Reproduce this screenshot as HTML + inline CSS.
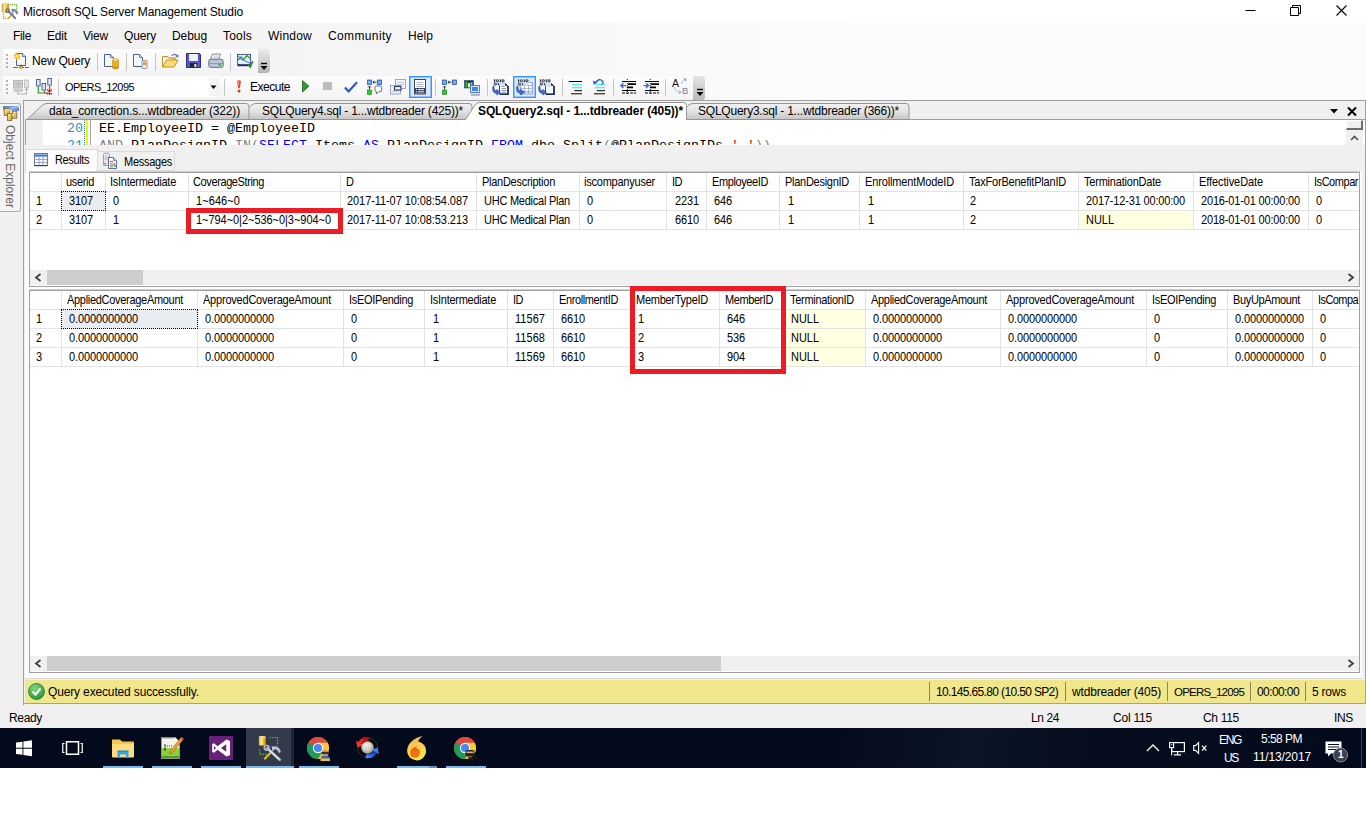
<!DOCTYPE html>
<html><head><meta charset="utf-8"><title>Microsoft SQL Server Management Studio</title><style>
html,body{margin:0;padding:0;}
body{width:1366px;height:827px;position:relative;overflow:hidden;background:#fff;font-family:"Liberation Sans",sans-serif;}
.t{position:absolute;white-space:pre;margin:0;padding:0;}
.r{position:absolute;box-sizing:border-box;margin:0;padding:0;}
svg{overflow:visible}
</style></head><body>
<div class="r" style="left:0px;top:0px;width:1366px;height:23px;background:#ffffff;"></div>
<svg class="r" style="left:0px;top:0px;" width="20" height="22" viewBox="0 0 20 22">
<defs><linearGradient id="cy" x1="0" y1="0" x2="1" y2="0"><stop offset="0" stop-color="#d9a21a"/><stop offset="0.35" stop-color="#fff0a8"/><stop offset="0.7" stop-color="#f0b81e"/><stop offset="1" stop-color="#c48a10"/></linearGradient></defs>
<g fill="#5fc02a"><rect x="10" y="4" width="1.2" height="1.2"/><rect x="12" y="4" width="1.2" height="1.2"/><rect x="14" y="4" width="1.2" height="1.2"/><rect x="16" y="4" width="1.2" height="1.2"/><rect x="16" y="6" width="1.2" height="1.2"/><rect x="16" y="8" width="1.2" height="1.2"/>
<rect x="3" y="14" width="1.2" height="1.2"/><rect x="3" y="16" width="1.2" height="1.2"/><rect x="3" y="18" width="1.2" height="1.2"/><rect x="5" y="18" width="1.2" height="1.2"/></g>
<rect x="2.2" y="3.4" width="6.6" height="9" rx="1" fill="url(#cy)" stroke="#b8902a" stroke-width="0.5"/><ellipse cx="5.5" cy="3.6" rx="3.1" ry="0.9" fill="#f4dc8a"/>
<path d="M8.2 18.4 L13 13.4" stroke="#e8a818" stroke-width="1.8" stroke-linecap="round"/><path d="M8.8 11.6 L15.2 18.2" stroke="#6c7c98" stroke-width="2" stroke-linecap="round" stroke-dasharray="1.2 0.4"/>
<circle cx="7.6" cy="10.6" r="1.7" fill="none" stroke="#5a6c8c" stroke-width="1.3"/><circle cx="7.4" cy="10.4" r="0.7" fill="#f0b020"/>
<path d="M11.2 9.4 h3.6 q2.6 0.6 3 3.8 l-1 1 q-1 -3.4 -3.4 -3.2 l-1.2 1.8" fill="#8c9ab4" stroke="#55657f" stroke-width="0.7"/>
</svg>
<div class="t" style="left:23px;top:4px;font-size:12px;line-height:16px;color:#000;letter-spacing:-0.132px;">Microsoft SQL Server Management Studio</div>
<svg class="r" style="left:1240px;top:0px;" width="120" height="23" viewBox="0 0 120 23">
<path d="M5.5 10.5 h10" stroke="#000" stroke-width="1" fill="none"/>
<path d="M50.5 7.5 h8 v8 h-8z M52.5 7.5 v-2 h8 v8 h-2" stroke="#000" stroke-width="1" fill="none"/>
<path d="M96.5 5.5 l10 10 M106.5 5.5 l-10 10" stroke="#000" stroke-width="1.1" fill="none"/>
</svg>
<div class="r" style="left:0px;top:23px;width:1366px;height:77px;background:linear-gradient(90deg,#f0f0f0 0%,#f6f6f6 30%,#fcfcfc 65%,#fcfcfc 100%);"></div>
<div class="t" style="left:13px;top:28px;font-size:12px;line-height:16px;color:#000;letter-spacing:-0.336px;">File</div>
<div class="t" style="left:47px;top:28px;font-size:12px;line-height:16px;color:#000;letter-spacing:-0.172px;">Edit</div>
<div class="t" style="left:83px;top:28px;font-size:12px;line-height:16px;color:#000;letter-spacing:-0.199px;">View</div>
<div class="t" style="left:124px;top:28px;font-size:12px;line-height:16px;color:#000;letter-spacing:-0.138px;">Query</div>
<div class="t" style="left:172px;top:28px;font-size:12px;line-height:16px;color:#000;letter-spacing:-0.075px;">Debug</div>
<div class="t" style="left:223px;top:28px;font-size:12px;line-height:16px;color:#000;letter-spacing:0.197px;">Tools</div>
<div class="t" style="left:268px;top:28px;font-size:12px;line-height:16px;color:#000;letter-spacing:0.219px;">Window</div>
<div class="t" style="left:328px;top:28px;font-size:12px;line-height:16px;color:#000;letter-spacing:0.368px;">Community</div>
<div class="t" style="left:408px;top:28px;font-size:12px;line-height:16px;color:#000;letter-spacing:0.078px;">Help</div>
<div class="r" style="left:3px;top:49px;width:256px;height:24px;background:linear-gradient(180deg,#fdfdfd,#f3f3f3);border-radius:2px 0 0 2px;"></div>
<div class="r" style="left:258px;top:49px;width:12px;height:24px;background:linear-gradient(180deg,#ececec,#b4b4b4);border-radius:0 3px 4px 0;"></div>
<div class="r" style="left:6px;top:54px;width:2px;height:2px;background:#b4b4b4;"></div>
<div class="r" style="left:6px;top:58px;width:2px;height:2px;background:#b4b4b4;"></div>
<div class="r" style="left:6px;top:62px;width:2px;height:2px;background:#b4b4b4;"></div>
<div class="r" style="left:6px;top:66px;width:2px;height:2px;background:#b4b4b4;"></div>
<div class="t" style="left:32px;top:53px;font-size:12px;line-height:16px;color:#000;letter-spacing:-0.226px;">New Query</div>
<div class="r" style="left:97px;top:53px;width:1px;height:18px;background:#c5c5c5;"></div>
<div class="r" style="left:126px;top:53px;width:1px;height:18px;background:#c5c5c5;"></div>
<div class="r" style="left:155px;top:53px;width:1px;height:18px;background:#c5c5c5;"></div>
<div class="r" style="left:230px;top:53px;width:1px;height:18px;background:#c5c5c5;"></div>
<svg class="r" style="left:260px;top:62px;" width="8" height="10" viewBox="0 0 8 10"><path d="M1 1.5h6" stroke="#000" stroke-width="1.4"/><path d="M0.5 4 h7 l-3.5 4z" fill="#000"/></svg>
<div class="r" style="left:3px;top:76px;width:691px;height:24px;background:linear-gradient(180deg,#fdfdfd,#f3f3f3);border-radius:2px 0 0 2px;"></div>
<div class="r" style="left:693px;top:76px;width:12px;height:24px;background:linear-gradient(180deg,#e6e6e6,#b9b9b9);border-radius:0 3px 3px 0;"></div>
<div class="r" style="left:6px;top:80px;width:2px;height:2px;background:#b4b4b4;"></div>
<div class="r" style="left:6px;top:84px;width:2px;height:2px;background:#b4b4b4;"></div>
<div class="r" style="left:6px;top:88px;width:2px;height:2px;background:#b4b4b4;"></div>
<div class="r" style="left:6px;top:92px;width:2px;height:2px;background:#b4b4b4;"></div>
<div class="r" style="left:58px;top:79px;width:1px;height:17px;background:#c5c5c5;"></div>
<div class="r" style="left:63px;top:77px;width:157px;height:20px;background:#ffffff;"></div>
<div class="r" style="left:209px;top:78px;width:11px;height:18px;background:#f4f4f4;"></div>
<div class="t" style="left:65px;top:79px;font-size:11.0px;line-height:16px;color:#000;letter-spacing:-0.565px;">OPERS_12095</div>
<svg class="r" style="left:210px;top:85px;" width="7" height="5" viewBox="0 0 7 5"><path d="M0.5 0.5 h6 l-3 3.5z" fill="#000"/></svg>
<div class="r" style="left:224px;top:79px;width:1px;height:17px;background:#c5c5c5;"></div>
<div class="t" style="left:250px;top:79px;font-size:12px;line-height:16px;color:#000;letter-spacing:-0.480px;">Execute</div>
<svg class="r" style="left:696px;top:88px;" width="8" height="10" viewBox="0 0 8 10"><path d="M1 1.5h6" stroke="#000" stroke-width="1.4"/><path d="M0.5 4 h7 l-3.5 4z" fill="#000"/></svg>
<div class="r" style="left:435px;top:79px;width:1px;height:17px;background:#c5c5c5;"></div>
<div class="r" style="left:487px;top:79px;width:1px;height:17px;background:#c5c5c5;"></div>
<div class="r" style="left:562px;top:79px;width:1px;height:17px;background:#c5c5c5;"></div>
<div class="r" style="left:613px;top:79px;width:1px;height:17px;background:#c5c5c5;"></div>
<div class="r" style="left:665px;top:79px;width:1px;height:17px;background:#c5c5c5;"></div>
<div class="r" style="left:0px;top:100px;width:1366px;height:628px;background:#f0f0f0;"></div>
<div class="r" style="left:23px;top:100px;width:1px;height:605px;background:#a0a0a0;"></div>
<div class="r" style="left:25px;top:119px;width:1px;height:26px;background:#a0a0a0;"></div>
<div class="r" style="left:25px;top:171px;width:1337px;height:507px;background:#fcfcfc;"></div>
<div class="r" style="left:25px;top:678px;width:1337px;height:1px;background:#d9d9d9;"></div>
<div class="r" style="left:-1px;top:103px;width:22px;height:109px;background:#f3f3f3;border:1px solid #ababab;border-left:none;border-radius:0 3px 3px 0;"></div>
<div class="t" style="left:0px;top:0px;font-size:12px;line-height:16px;color:#666;letter-spacing:0.020px;transform-origin:0 0;transform:translate(18px,125px) rotate(90deg);">Object Explorer</div>
<svg class="r" style="left:3px;top:106px;" width="17" height="15" viewBox="0 0 17 15">
<defs><linearGradient id="oeb" x1="0" y1="0" x2="1" y2="1"><stop offset="0" stop-color="#3a68d0"/><stop offset="0.55" stop-color="#9cc0f8"/><stop offset="1" stop-color="#2a58c8"/></linearGradient>
<linearGradient id="oec" x1="0" y1="0" x2="1" y2="1"><stop offset="0" stop-color="#fff0a0"/><stop offset="1" stop-color="#e0a020"/></linearGradient></defs>
<rect x="0" y="0" width="16" height="4.6" fill="url(#oeb)"/>
<rect x="1.2" y="2.4" width="5.2" height="7" fill="url(#oec)" stroke="#6a5420" stroke-width="0.7"/><rect x="6" y="3" width="1.4" height="2" fill="#f8e480"/>
<rect x="9.4" y="5.2" width="4.4" height="7" fill="url(#oec)" stroke="#6a5420" stroke-width="0.7"/><rect x="13.8" y="5.6" width="1.2" height="2" fill="#f8e480"/>
<rect x="4.4" y="7.4" width="4.4" height="7" fill="url(#oec)" stroke="#6a5420" stroke-width="0.7"/><rect x="8.8" y="8.2" width="1" height="2" fill="#f8e480"/>
</svg>
<div class="r" style="left:23px;top:100px;width:1343px;height:1px;background:#a0a0a0;"></div>
<div class="r" style="left:1365px;top:100px;width:1px;height:604px;background:#a0a0a0;"></div>
<div class="r" style="left:25px;top:119px;width:1341px;height:1px;background:#a0a0a0;"></div>
<svg class="r" style="left:25px;top:101px;" width="1341" height="19" viewBox="0 0 1341 19">
<defs><linearGradient id="tg" x1="0" y1="0" x2="0" y2="1"><stop offset="0" stop-color="#f2f2f2"/><stop offset="0.5" stop-color="#e2e2e2"/><stop offset="1" stop-color="#c4c4c4"/></linearGradient></defs>
<path d="M649 18.5 L663 4.5 Q665 2.5 668 2.5 H881 Q884 2.5 884 5.5 V18.5 Z" fill="url(#tg)" stroke="#949494" stroke-width="1"/>
<path d="M212 18.5 L226 4.5 Q228 2.5 231 2.5 H444 Q447 2.5 447 5.5 V18.5 Z" fill="url(#tg)" stroke="#949494" stroke-width="1"/>
<path d="M2 18.5 L17 4.5 Q19 2.5 22 2.5 H221 Q224 2.5 224 5.5 V18.5 Z" fill="url(#tg)" stroke="#949494" stroke-width="1"/>
<path d="M440 19.5 L450 4 Q452 1.5 455 1.5 H658.5 Q661.5 1.5 661.5 4.5 V19.5 Z" fill="#ffffff" stroke="#949494" stroke-width="1"/>
<rect x="441" y="18" width="220" height="2" fill="#ffffff"/>
<path d="M1305 8 h8 l-4 4.5z" fill="#000"/>
<path d="M1323 6.5 l8 8 M1331 6.5 l-8 8" stroke="#000" stroke-width="2"/>
</svg>
<div class="t" style="left:49px;top:103px;font-size:12px;line-height:16px;color:#000;letter-spacing:-0.174px;">data_correction.s...wtdbreader (322))</div>
<div class="t" style="left:262px;top:103px;font-size:12px;line-height:16px;color:#000;letter-spacing:-0.222px;">SQLQuery4.sql - 1...wtdbreader (425))*</div>
<div class="t" style="left:478px;top:103px;font-size:12px;line-height:16px;color:#000;font-weight:bold;letter-spacing:-0.119px;">SQLQuery2.sql - 1...tdbreader (405))*</div>
<div class="t" style="left:698px;top:103px;font-size:12px;line-height:16px;color:#000;letter-spacing:-0.222px;">SQLQuery3.sql - 1...wtdbreader (366))*</div>
<div class="r" style="left:26px;top:120px;width:1339px;height:25px;background:#ffffff;"></div>
<div class="r" style="left:26px;top:120px;width:17px;height:25px;background:#f0f0f0;"></div>
<div class="r" style="left:84px;top:120px;width:1px;height:25px;border-left:1px dotted #2b91af;"></div>
<div class="r" style="left:86px;top:120px;width:2px;height:25px;background:#ffee00;"></div>
<div class="r" style="left:90px;top:120px;width:1px;height:25px;background:#a5a5a5;"></div>
<div class="t" style="left:67px;top:120px;font-size:13.333px;line-height:17px;color:#2b91af;font-family:'Liberation Mono';">20</div>
<div class="t" style="left:99px;top:120px;font-size:13.333px;line-height:17px;color:#000;font-family:'Liberation Mono';">EE.EmployeeID = @EmployeeID</div>
<div class="r" style="left:26px;top:137px;width:1320px;height:8px;overflow:hidden">
<div class="t" style="left:41px;top:0px;font-family:'Liberation Mono';font-size:13.333px;line-height:17px;color:#2b91af">21</div>
<div class="t" style="left:73px;top:0px;font-family:'Liberation Mono';font-size:13.333px;line-height:17px;color:#808080">AND </div>
<div class="t" style="left:105px;top:0px;font-family:'Liberation Mono';font-size:13.333px;line-height:17px;color:#000">PlanDesignID </div>
<div class="t" style="left:209px;top:0px;font-family:'Liberation Mono';font-size:13.333px;line-height:17px;color:#808080">IN</div>
<div class="t" style="left:225px;top:0px;font-family:'Liberation Mono';font-size:13.333px;line-height:17px;color:#808080">(</div>
<div class="t" style="left:233px;top:0px;font-family:'Liberation Mono';font-size:13.333px;line-height:17px;color:#0000ff">SELECT </div>
<div class="t" style="left:289px;top:0px;font-family:'Liberation Mono';font-size:13.333px;line-height:17px;color:#000">Items </div>
<div class="t" style="left:337px;top:0px;font-family:'Liberation Mono';font-size:13.333px;line-height:17px;color:#0000ff">AS </div>
<div class="t" style="left:361px;top:0px;font-family:'Liberation Mono';font-size:13.333px;line-height:17px;color:#000">PlanDesignID </div>
<div class="t" style="left:465px;top:0px;font-family:'Liberation Mono';font-size:13.333px;line-height:17px;color:#0000ff">FROM </div>
<div class="t" style="left:505px;top:0px;font-family:'Liberation Mono';font-size:13.333px;line-height:17px;color:#000">dbo</div>
<div class="t" style="left:529px;top:0px;font-family:'Liberation Mono';font-size:13.333px;line-height:17px;color:#808080">.</div>
<div class="t" style="left:537px;top:0px;font-family:'Liberation Mono';font-size:13.333px;line-height:17px;color:#000">Split</div>
<div class="t" style="left:577px;top:0px;font-family:'Liberation Mono';font-size:13.333px;line-height:17px;color:#808080">(</div>
<div class="t" style="left:585px;top:0px;font-family:'Liberation Mono';font-size:13.333px;line-height:17px;color:#000">@PlanDesignIDs</div>
<div class="t" style="left:697px;top:0px;font-family:'Liberation Mono';font-size:13.333px;line-height:17px;color:#808080">,</div>
<div class="t" style="left:705px;top:0px;font-family:'Liberation Mono';font-size:13.333px;line-height:17px;color:#ff0000">&#x27;,&#x27;</div>
<div class="t" style="left:729px;top:0px;font-family:'Liberation Mono';font-size:13.333px;line-height:17px;color:#808080">))</div>
</div>
<div class="r" style="left:1346px;top:120px;width:17px;height:25px;background:#f0f0f0;"></div>
<div class="r" style="left:1346px;top:120px;width:17px;height:10px;background:#f0f0f0;border:1px solid #fff;border-right:2px solid #6d6d6d;border-bottom:2px solid #6d6d6d;"></div>
<svg class="r" style="left:1350px;top:135px;" width="9" height="6" viewBox="0 0 9 6"><path d="M1 5 L4.5 1.5 L8 5" stroke="#505050" stroke-width="1.6" fill="none"/></svg>
<div class="r" style="left:1363px;top:120px;width:2px;height:25px;background:#ffffff;"></div>
<div class="r" style="left:25px;top:149px;width:73px;height:24px;background:#fcfcfc;border:1px solid #dadada;border-bottom:none;"></div>
<div class="r" style="left:98px;top:151px;width:77px;height:20px;background:#f0f0f0;border:1px solid #dadada;border-left:none;"></div>
<div class="t" style="left:55px;top:152px;font-size:11px;line-height:16px;color:#000;letter-spacing:-0.384px;transform:scaleY(1.12);transform-origin:0 11.5px;">Results</div>
<div class="t" style="left:124px;top:154px;font-size:11px;line-height:16px;color:#000;letter-spacing:-0.268px;transform:scaleY(1.12);transform-origin:0 11.5px;">Messages</div>
<svg class="r" style="left:34px;top:153px;" width="14" height="13" viewBox="0 0 14 13"><rect x="0.5" y="0.5" width="13" height="12" fill="#f4f8ff" stroke="#6b7a99"/><rect x="1" y="1" width="12" height="2.6" fill="#4a74d8"/><rect x="1" y="1" width="12" height="1" fill="#8cb0f0"/>
<path d="M1 6.5h12M1 9.5h12M5 3.6v9M9 3.6v9" stroke="#8b98b5" stroke-width="0.8"/><path d="M0.5 12.6 h13" stroke="#3a4258" stroke-width="1.2"/></svg>
<svg class="r" style="left:103px;top:152px;" width="15" height="17" viewBox="0 0 15 17"><path d="M0.5 2.5 q0 -1.6 3 -1.6 q3 0 3 1.6 v11 h-6z" fill="#e4e6ea" stroke="#8a8f9a" stroke-width="0.8"/><path d="M1.5 5h4M1.5 7h4" stroke="#a8adb8" stroke-width="0.7"/><rect x="1.4" y="11" width="1.6" height="1.4" fill="#38b038"/>
<path d="M5.5 5.5 h5 l3 3 v8 h-8z" fill="#fdfdff" stroke="#4a5c9c" stroke-width="0.9"/><path d="M10.5 5.5 v3 h3" fill="#d0d8f0" stroke="#4a5c9c" stroke-width="0.7"/>
<path d="M7 9.5h3" stroke="#e03020" stroke-width="0.9"/><path d="M7 11.3h5" stroke="#e08020" stroke-width="0.9"/><path d="M7 13.1h5" stroke="#e03020" stroke-width="0.9"/><path d="M7 14.9h3" stroke="#30a030" stroke-width="0.9"/><rect x="11.4" y="12.4" width="1.2" height="2.8" fill="#30a030"/></svg>
<div class="r" style="left:0;top:0;width:1359px;height:827px;overflow:hidden">
<div class="r" style="left:29px;top:172px;width:1331px;height:115px;background:#ffffff;border:1px solid #a0a0a0;"></div>
<div class="r" style="left:30px;top:191px;width:1329px;height:1px;background:#e3e3e3;"></div>
<div class="r" style="left:30px;top:210px;width:1329px;height:1px;background:#e3e3e3;"></div>
<div class="r" style="left:30px;top:229px;width:1329px;height:1px;background:#e3e3e3;"></div>
<div class="r" style="left:61px;top:173px;width:1px;height:57px;background:#e3e3e3;"></div>
<div class="r" style="left:105px;top:173px;width:1px;height:57px;background:#e3e3e3;"></div>
<div class="r" style="left:188px;top:173px;width:1px;height:57px;background:#e3e3e3;"></div>
<div class="r" style="left:340px;top:173px;width:1px;height:57px;background:#e3e3e3;"></div>
<div class="r" style="left:476px;top:173px;width:1px;height:57px;background:#e3e3e3;"></div>
<div class="r" style="left:579px;top:173px;width:1px;height:57px;background:#e3e3e3;"></div>
<div class="r" style="left:666px;top:173px;width:1px;height:57px;background:#e3e3e3;"></div>
<div class="r" style="left:706px;top:173px;width:1px;height:57px;background:#e3e3e3;"></div>
<div class="r" style="left:779px;top:173px;width:1px;height:57px;background:#e3e3e3;"></div>
<div class="r" style="left:859px;top:173px;width:1px;height:57px;background:#e3e3e3;"></div>
<div class="r" style="left:963px;top:173px;width:1px;height:57px;background:#e3e3e3;"></div>
<div class="r" style="left:1078px;top:173px;width:1px;height:57px;background:#e3e3e3;"></div>
<div class="r" style="left:1193px;top:173px;width:1px;height:57px;background:#e3e3e3;"></div>
<div class="r" style="left:1308px;top:173px;width:1px;height:57px;background:#e3e3e3;"></div>
<div class="t" style="left:66px;top:175px;font-size:11px;line-height:15px;color:#000;letter-spacing:-0.328px;transform:scaleY(1.12);transform-origin:0 11px;">userid</div>
<div class="t" style="left:110px;top:175px;font-size:11px;line-height:15px;color:#000;letter-spacing:-0.265px;transform:scaleY(1.12);transform-origin:0 11px;">IsIntermediate</div>
<div class="t" style="left:193px;top:175px;font-size:11px;line-height:15px;color:#000;letter-spacing:-0.388px;transform:scaleY(1.12);transform-origin:0 11px;">CoverageString</div>
<div class="t" style="left:346px;top:175px;font-size:11px;line-height:15px;color:#000;transform:scaleY(1.12);transform-origin:0 11px;">D</div>
<div class="t" style="left:482px;top:175px;font-size:11px;line-height:15px;color:#000;letter-spacing:-0.270px;transform:scaleY(1.12);transform-origin:0 11px;">PlanDescription</div>
<div class="t" style="left:584px;top:175px;font-size:11px;line-height:15px;color:#000;letter-spacing:-0.230px;transform:scaleY(1.12);transform-origin:0 11px;">iscompanyuser</div>
<div class="t" style="left:672px;top:175px;font-size:11px;line-height:15px;color:#000;letter-spacing:-0.500px;transform:scaleY(1.12);transform-origin:0 11px;">ID</div>
<div class="t" style="left:712px;top:175px;font-size:11px;line-height:15px;color:#000;letter-spacing:-0.392px;transform:scaleY(1.12);transform-origin:0 11px;">EmployeeID</div>
<div class="t" style="left:785px;top:175px;font-size:11px;line-height:15px;color:#000;letter-spacing:-0.272px;transform:scaleY(1.12);transform-origin:0 11px;">PlanDesignID</div>
<div class="t" style="left:865px;top:175px;font-size:11px;line-height:15px;color:#000;letter-spacing:-0.131px;transform:scaleY(1.12);transform-origin:0 11px;">EnrollmentModeID</div>
<div class="t" style="left:969px;top:175px;font-size:11px;line-height:15px;color:#000;letter-spacing:-0.205px;transform:scaleY(1.12);transform-origin:0 11px;">TaxForBenefitPlanID</div>
<div class="t" style="left:1084px;top:175px;font-size:11px;line-height:15px;color:#000;letter-spacing:-0.206px;transform:scaleY(1.12);transform-origin:0 11px;">TerminationDate</div>
<div class="t" style="left:1199px;top:175px;font-size:11px;line-height:15px;color:#000;letter-spacing:-0.095px;transform:scaleY(1.12);transform-origin:0 11px;">EffectiveDate</div>
<div class="t" style="left:1314px;top:175px;font-size:11px;line-height:15px;color:#000;letter-spacing:-0.461px;transform:scaleY(1.12);transform-origin:0 11px;">IsCompar</div>
<div class="t" style="left:36px;top:194px;font-size:11px;line-height:15px;color:#000;transform:scaleY(1.12);transform-origin:0 11px;">1</div>
<div class="r" style="left:61px;top:191px;width:45px;height:20px;background:#e9edf2;border:1px dotted #000;"></div>
<div class="t" style="left:69px;top:194px;font-size:11px;line-height:15px;color:#000;letter-spacing:-0.121px;transform:scaleY(1.12);transform-origin:0 11px;">3107</div>
<div class="t" style="left:113px;top:194px;font-size:11px;line-height:15px;color:#000;transform:scaleY(1.12);transform-origin:0 11px;">0</div>
<div class="t" style="left:196px;top:194px;font-size:11px;line-height:15px;color:#000;letter-spacing:0.080px;transform:scaleY(1.12);transform-origin:0 11px;">1~646~0</div>
<div class="t" style="left:347px;top:194px;font-size:11px;line-height:15px;color:#000;letter-spacing:-0.076px;transform:scaleY(1.12);transform-origin:0 11px;">2017-11-07 10:08:54.087</div>
<div class="t" style="left:484px;top:194px;font-size:11px;line-height:15px;color:#000;letter-spacing:-0.242px;transform:scaleY(1.12);transform-origin:0 11px;">UHC Medical Plan</div>
<div class="t" style="left:587px;top:194px;font-size:11px;line-height:15px;color:#000;transform:scaleY(1.12);transform-origin:0 11px;">0</div>
<div class="t" style="left:675px;top:194px;font-size:11px;line-height:15px;color:#000;letter-spacing:-0.121px;transform:scaleY(1.12);transform-origin:0 11px;">2231</div>
<div class="t" style="left:714px;top:194px;font-size:11px;line-height:15px;color:#000;letter-spacing:-0.120px;transform:scaleY(1.12);transform-origin:0 11px;">646</div>
<div class="t" style="left:788px;top:194px;font-size:11px;line-height:15px;color:#000;transform:scaleY(1.12);transform-origin:0 11px;">1</div>
<div class="t" style="left:868px;top:194px;font-size:11px;line-height:15px;color:#000;transform:scaleY(1.12);transform-origin:0 11px;">1</div>
<div class="t" style="left:970px;top:194px;font-size:11px;line-height:15px;color:#000;transform:scaleY(1.12);transform-origin:0 11px;">2</div>
<div class="t" style="left:1086px;top:194px;font-size:11px;line-height:15px;color:#000;letter-spacing:-0.166px;transform:scaleY(1.12);transform-origin:0 11px;">2017-12-31 00:00:00</div>
<div class="t" style="left:1201px;top:194px;font-size:11px;line-height:15px;color:#000;letter-spacing:-0.166px;transform:scaleY(1.12);transform-origin:0 11px;">2016-01-01 00:00:00</div>
<div class="t" style="left:1316px;top:194px;font-size:11px;line-height:15px;color:#000;transform:scaleY(1.12);transform-origin:0 11px;">0</div>
<div class="t" style="left:36px;top:213px;font-size:11px;line-height:15px;color:#000;transform:scaleY(1.12);transform-origin:0 11px;">2</div>
<div class="t" style="left:69px;top:213px;font-size:11px;line-height:15px;color:#000;letter-spacing:-0.121px;transform:scaleY(1.12);transform-origin:0 11px;">3107</div>
<div class="t" style="left:113px;top:213px;font-size:11px;line-height:15px;color:#000;transform:scaleY(1.12);transform-origin:0 11px;">1</div>
<div class="t" style="left:196px;top:213px;font-size:11px;line-height:15px;color:#000;letter-spacing:-0.045px;transform:scaleY(1.12);transform-origin:0 11px;">1~794~0|2~536~0|3~904~0</div>
<div class="t" style="left:347px;top:213px;font-size:11px;line-height:15px;color:#000;letter-spacing:-0.076px;transform:scaleY(1.12);transform-origin:0 11px;">2017-11-07 10:08:53.213</div>
<div class="t" style="left:484px;top:213px;font-size:11px;line-height:15px;color:#000;letter-spacing:-0.242px;transform:scaleY(1.12);transform-origin:0 11px;">UHC Medical Plan</div>
<div class="t" style="left:587px;top:213px;font-size:11px;line-height:15px;color:#000;transform:scaleY(1.12);transform-origin:0 11px;">0</div>
<div class="t" style="left:675px;top:213px;font-size:11px;line-height:15px;color:#000;letter-spacing:-0.121px;transform:scaleY(1.12);transform-origin:0 11px;">6610</div>
<div class="t" style="left:714px;top:213px;font-size:11px;line-height:15px;color:#000;letter-spacing:-0.120px;transform:scaleY(1.12);transform-origin:0 11px;">646</div>
<div class="t" style="left:788px;top:213px;font-size:11px;line-height:15px;color:#000;transform:scaleY(1.12);transform-origin:0 11px;">1</div>
<div class="t" style="left:868px;top:213px;font-size:11px;line-height:15px;color:#000;transform:scaleY(1.12);transform-origin:0 11px;">1</div>
<div class="t" style="left:970px;top:213px;font-size:11px;line-height:15px;color:#000;transform:scaleY(1.12);transform-origin:0 11px;">2</div>
<div class="r" style="left:1079px;top:211px;width:114px;height:18px;background:#ffffe1;"></div>
<div class="t" style="left:1086px;top:213px;font-size:11px;line-height:15px;color:#000;letter-spacing:-0.031px;transform:scaleY(1.12);transform-origin:0 11px;">NULL</div>
<div class="t" style="left:1201px;top:213px;font-size:11px;line-height:15px;color:#000;letter-spacing:-0.166px;transform:scaleY(1.12);transform-origin:0 11px;">2018-01-01 00:00:00</div>
<div class="t" style="left:1316px;top:213px;font-size:11px;line-height:15px;color:#000;transform:scaleY(1.12);transform-origin:0 11px;">0</div>
</div>
<div class="r" style="left:1359px;top:172px;width:1px;height:115px;background:#a0a0a0;"></div>
<div class="r" style="left:29px;top:171px;width:1331px;height:1px;background:#d0d0d0;"></div>
<div class="r" style="left:30px;top:270px;width:1329px;height:15px;background:#f0f0f0;"></div>
<div class="r" style="left:47px;top:270px;width:96px;height:15px;background:#cdcdcd;"></div>
<svg class="r" style="left:34px;top:273px;" width="8" height="9" viewBox="0 0 8 9"><path d="M6.5 1 L2 4.5 L6.5 8" stroke="#404040" stroke-width="1.8" fill="none"/></svg>
<svg class="r" style="left:1347px;top:273px;" width="8" height="9" viewBox="0 0 8 9"><path d="M1.5 1 L6 4.5 L1.5 8" stroke="#404040" stroke-width="1.8" fill="none"/></svg>
<div class="r" style="left:29px;top:286px;width:1331px;height:1px;background:#a0a0a0;"></div>
<div class="r" style="left:0;top:0;width:1359px;height:827px;overflow:hidden">
<div class="r" style="left:29px;top:290px;width:1331px;height:383px;background:#ffffff;border:1px solid #a0a0a0;"></div>
<div class="r" style="left:30px;top:309px;width:1329px;height:1px;background:#e3e3e3;"></div>
<div class="r" style="left:30px;top:328px;width:1329px;height:1px;background:#e3e3e3;"></div>
<div class="r" style="left:30px;top:347px;width:1329px;height:1px;background:#e3e3e3;"></div>
<div class="r" style="left:30px;top:366px;width:1329px;height:1px;background:#e3e3e3;"></div>
<div class="r" style="left:61px;top:291px;width:1px;height:76px;background:#e3e3e3;"></div>
<div class="r" style="left:197px;top:291px;width:1px;height:76px;background:#e3e3e3;"></div>
<div class="r" style="left:343px;top:291px;width:1px;height:76px;background:#e3e3e3;"></div>
<div class="r" style="left:424px;top:291px;width:1px;height:76px;background:#e3e3e3;"></div>
<div class="r" style="left:507px;top:291px;width:1px;height:76px;background:#e3e3e3;"></div>
<div class="r" style="left:553px;top:291px;width:1px;height:76px;background:#e3e3e3;"></div>
<div class="r" style="left:630px;top:291px;width:1px;height:76px;background:#e3e3e3;"></div>
<div class="r" style="left:719px;top:291px;width:1px;height:76px;background:#e3e3e3;"></div>
<div class="r" style="left:785px;top:291px;width:1px;height:76px;background:#e3e3e3;"></div>
<div class="r" style="left:865px;top:291px;width:1px;height:76px;background:#e3e3e3;"></div>
<div class="r" style="left:1000px;top:291px;width:1px;height:76px;background:#e3e3e3;"></div>
<div class="r" style="left:1146px;top:291px;width:1px;height:76px;background:#e3e3e3;"></div>
<div class="r" style="left:1227px;top:291px;width:1px;height:76px;background:#e3e3e3;"></div>
<div class="r" style="left:1312px;top:291px;width:1px;height:76px;background:#e3e3e3;"></div>
<div class="t" style="left:67px;top:293px;font-size:11px;line-height:15px;color:#000;letter-spacing:-0.301px;transform:scaleY(1.12);transform-origin:0 11px;">AppliedCoverageAmount</div>
<div class="t" style="left:203px;top:293px;font-size:11px;line-height:15px;color:#000;letter-spacing:-0.214px;transform:scaleY(1.12);transform-origin:0 11px;">ApprovedCoverageAmount</div>
<div class="t" style="left:349px;top:293px;font-size:11px;line-height:15px;color:#000;letter-spacing:-0.323px;transform:scaleY(1.12);transform-origin:0 11px;">IsEOIPending</div>
<div class="t" style="left:430px;top:293px;font-size:11px;line-height:15px;color:#000;letter-spacing:-0.265px;transform:scaleY(1.12);transform-origin:0 11px;">IsIntermediate</div>
<div class="t" style="left:513px;top:293px;font-size:11px;line-height:15px;color:#000;letter-spacing:-0.500px;transform:scaleY(1.12);transform-origin:0 11px;">ID</div>
<div class="t" style="left:559px;top:293px;font-size:11px;line-height:15px;color:#000;letter-spacing:-0.382px;transform:scaleY(1.12);transform-origin:0 11px;">EnrollmentID</div>
<div class="t" style="left:636px;top:293px;font-size:11px;line-height:15px;color:#000;letter-spacing:-0.267px;transform:scaleY(1.12);transform-origin:0 11px;">MemberTypeID</div>
<div class="t" style="left:725px;top:293px;font-size:11px;line-height:15px;color:#000;letter-spacing:-0.418px;transform:scaleY(1.12);transform-origin:0 11px;">MemberID</div>
<div class="t" style="left:790px;top:293px;font-size:11px;line-height:15px;color:#000;letter-spacing:-0.297px;transform:scaleY(1.12);transform-origin:0 11px;">TerminationID</div>
<div class="t" style="left:871px;top:293px;font-size:11px;line-height:15px;color:#000;letter-spacing:-0.301px;transform:scaleY(1.12);transform-origin:0 11px;">AppliedCoverageAmount</div>
<div class="t" style="left:1006px;top:293px;font-size:11px;line-height:15px;color:#000;letter-spacing:-0.214px;transform:scaleY(1.12);transform-origin:0 11px;">ApprovedCoverageAmount</div>
<div class="t" style="left:1152px;top:293px;font-size:11px;line-height:15px;color:#000;letter-spacing:-0.323px;transform:scaleY(1.12);transform-origin:0 11px;">IsEOIPending</div>
<div class="t" style="left:1233px;top:293px;font-size:11px;line-height:15px;color:#000;letter-spacing:-0.358px;transform:scaleY(1.12);transform-origin:0 11px;">BuyUpAmount</div>
<div class="t" style="left:1318px;top:293px;font-size:11px;line-height:15px;color:#000;letter-spacing:-0.576px;transform:scaleY(1.12);transform-origin:0 11px;">IsCompa</div>
<div class="t" style="left:36px;top:312px;font-size:11px;line-height:15px;color:#000;transform:scaleY(1.12);transform-origin:0 11px;">1</div>
<div class="r" style="left:61px;top:309px;width:137px;height:20px;background:#e9edf2;border:1px dotted #000;"></div>
<div class="t" style="left:69px;top:312px;font-size:11px;line-height:15px;color:#000;letter-spacing:-0.113px;transform:scaleY(1.12);transform-origin:0 11px;">0.0000000000</div>
<div class="t" style="left:205px;top:312px;font-size:11px;line-height:15px;color:#000;letter-spacing:-0.113px;transform:scaleY(1.12);transform-origin:0 11px;">0.0000000000</div>
<div class="t" style="left:351px;top:312px;font-size:11px;line-height:15px;color:#000;transform:scaleY(1.12);transform-origin:0 11px;">0</div>
<div class="t" style="left:433px;top:312px;font-size:11px;line-height:15px;color:#000;transform:scaleY(1.12);transform-origin:0 11px;">1</div>
<div class="t" style="left:515px;top:312px;font-size:11px;line-height:15px;color:#000;letter-spacing:0.044px;transform:scaleY(1.12);transform-origin:0 11px;">11567</div>
<div class="t" style="left:561px;top:312px;font-size:11px;line-height:15px;color:#000;letter-spacing:-0.121px;transform:scaleY(1.12);transform-origin:0 11px;">6610</div>
<div class="t" style="left:638px;top:312px;font-size:11px;line-height:15px;color:#000;transform:scaleY(1.12);transform-origin:0 11px;">1</div>
<div class="t" style="left:727px;top:312px;font-size:11px;line-height:15px;color:#000;letter-spacing:-0.120px;transform:scaleY(1.12);transform-origin:0 11px;">646</div>
<div class="r" style="left:786px;top:310px;width:79px;height:18px;background:#ffffe1;"></div>
<div class="t" style="left:791px;top:312px;font-size:11px;line-height:15px;color:#000;letter-spacing:-0.031px;transform:scaleY(1.12);transform-origin:0 11px;">NULL</div>
<div class="t" style="left:873px;top:312px;font-size:11px;line-height:15px;color:#000;letter-spacing:-0.113px;transform:scaleY(1.12);transform-origin:0 11px;">0.0000000000</div>
<div class="t" style="left:1008px;top:312px;font-size:11px;line-height:15px;color:#000;letter-spacing:-0.113px;transform:scaleY(1.12);transform-origin:0 11px;">0.0000000000</div>
<div class="t" style="left:1154px;top:312px;font-size:11px;line-height:15px;color:#000;transform:scaleY(1.12);transform-origin:0 11px;">0</div>
<div class="t" style="left:1235px;top:312px;font-size:11px;line-height:15px;color:#000;letter-spacing:-0.113px;transform:scaleY(1.12);transform-origin:0 11px;">0.0000000000</div>
<div class="t" style="left:1320px;top:312px;font-size:11px;line-height:15px;color:#000;transform:scaleY(1.12);transform-origin:0 11px;">0</div>
<div class="t" style="left:36px;top:331px;font-size:11px;line-height:15px;color:#000;transform:scaleY(1.12);transform-origin:0 11px;">2</div>
<div class="t" style="left:69px;top:331px;font-size:11px;line-height:15px;color:#000;letter-spacing:-0.113px;transform:scaleY(1.12);transform-origin:0 11px;">0.0000000000</div>
<div class="t" style="left:205px;top:331px;font-size:11px;line-height:15px;color:#000;letter-spacing:-0.113px;transform:scaleY(1.12);transform-origin:0 11px;">0.0000000000</div>
<div class="t" style="left:351px;top:331px;font-size:11px;line-height:15px;color:#000;transform:scaleY(1.12);transform-origin:0 11px;">0</div>
<div class="t" style="left:433px;top:331px;font-size:11px;line-height:15px;color:#000;transform:scaleY(1.12);transform-origin:0 11px;">1</div>
<div class="t" style="left:515px;top:331px;font-size:11px;line-height:15px;color:#000;letter-spacing:0.044px;transform:scaleY(1.12);transform-origin:0 11px;">11568</div>
<div class="t" style="left:561px;top:331px;font-size:11px;line-height:15px;color:#000;letter-spacing:-0.121px;transform:scaleY(1.12);transform-origin:0 11px;">6610</div>
<div class="t" style="left:638px;top:331px;font-size:11px;line-height:15px;color:#000;transform:scaleY(1.12);transform-origin:0 11px;">2</div>
<div class="t" style="left:727px;top:331px;font-size:11px;line-height:15px;color:#000;letter-spacing:-0.120px;transform:scaleY(1.12);transform-origin:0 11px;">536</div>
<div class="r" style="left:786px;top:329px;width:79px;height:18px;background:#ffffe1;"></div>
<div class="t" style="left:791px;top:331px;font-size:11px;line-height:15px;color:#000;letter-spacing:-0.031px;transform:scaleY(1.12);transform-origin:0 11px;">NULL</div>
<div class="t" style="left:873px;top:331px;font-size:11px;line-height:15px;color:#000;letter-spacing:-0.113px;transform:scaleY(1.12);transform-origin:0 11px;">0.0000000000</div>
<div class="t" style="left:1008px;top:331px;font-size:11px;line-height:15px;color:#000;letter-spacing:-0.113px;transform:scaleY(1.12);transform-origin:0 11px;">0.0000000000</div>
<div class="t" style="left:1154px;top:331px;font-size:11px;line-height:15px;color:#000;transform:scaleY(1.12);transform-origin:0 11px;">0</div>
<div class="t" style="left:1235px;top:331px;font-size:11px;line-height:15px;color:#000;letter-spacing:-0.113px;transform:scaleY(1.12);transform-origin:0 11px;">0.0000000000</div>
<div class="t" style="left:1320px;top:331px;font-size:11px;line-height:15px;color:#000;transform:scaleY(1.12);transform-origin:0 11px;">0</div>
<div class="t" style="left:36px;top:350px;font-size:11px;line-height:15px;color:#000;transform:scaleY(1.12);transform-origin:0 11px;">3</div>
<div class="t" style="left:69px;top:350px;font-size:11px;line-height:15px;color:#000;letter-spacing:-0.113px;transform:scaleY(1.12);transform-origin:0 11px;">0.0000000000</div>
<div class="t" style="left:205px;top:350px;font-size:11px;line-height:15px;color:#000;letter-spacing:-0.113px;transform:scaleY(1.12);transform-origin:0 11px;">0.0000000000</div>
<div class="t" style="left:351px;top:350px;font-size:11px;line-height:15px;color:#000;transform:scaleY(1.12);transform-origin:0 11px;">0</div>
<div class="t" style="left:433px;top:350px;font-size:11px;line-height:15px;color:#000;transform:scaleY(1.12);transform-origin:0 11px;">1</div>
<div class="t" style="left:515px;top:350px;font-size:11px;line-height:15px;color:#000;letter-spacing:0.044px;transform:scaleY(1.12);transform-origin:0 11px;">11569</div>
<div class="t" style="left:561px;top:350px;font-size:11px;line-height:15px;color:#000;letter-spacing:-0.121px;transform:scaleY(1.12);transform-origin:0 11px;">6610</div>
<div class="t" style="left:638px;top:350px;font-size:11px;line-height:15px;color:#000;transform:scaleY(1.12);transform-origin:0 11px;">3</div>
<div class="t" style="left:727px;top:350px;font-size:11px;line-height:15px;color:#000;letter-spacing:-0.120px;transform:scaleY(1.12);transform-origin:0 11px;">904</div>
<div class="r" style="left:786px;top:348px;width:79px;height:18px;background:#ffffe1;"></div>
<div class="t" style="left:791px;top:350px;font-size:11px;line-height:15px;color:#000;letter-spacing:-0.031px;transform:scaleY(1.12);transform-origin:0 11px;">NULL</div>
<div class="t" style="left:873px;top:350px;font-size:11px;line-height:15px;color:#000;letter-spacing:-0.113px;transform:scaleY(1.12);transform-origin:0 11px;">0.0000000000</div>
<div class="t" style="left:1008px;top:350px;font-size:11px;line-height:15px;color:#000;letter-spacing:-0.113px;transform:scaleY(1.12);transform-origin:0 11px;">0.0000000000</div>
<div class="t" style="left:1154px;top:350px;font-size:11px;line-height:15px;color:#000;transform:scaleY(1.12);transform-origin:0 11px;">0</div>
<div class="t" style="left:1235px;top:350px;font-size:11px;line-height:15px;color:#000;letter-spacing:-0.113px;transform:scaleY(1.12);transform-origin:0 11px;">0.0000000000</div>
<div class="t" style="left:1320px;top:350px;font-size:11px;line-height:15px;color:#000;transform:scaleY(1.12);transform-origin:0 11px;">0</div>
</div>
<div class="r" style="left:1359px;top:290px;width:1px;height:383px;background:#a0a0a0;"></div>
<div class="r" style="left:29px;top:289px;width:1331px;height:1px;background:#d0d0d0;"></div>
<div class="r" style="left:30px;top:656px;width:1329px;height:15px;background:#f0f0f0;"></div>
<div class="r" style="left:47px;top:656px;width:674px;height:15px;background:#cdcdcd;"></div>
<svg class="r" style="left:34px;top:659px;" width="8" height="9" viewBox="0 0 8 9"><path d="M6.5 1 L2 4.5 L6.5 8" stroke="#404040" stroke-width="1.8" fill="none"/></svg>
<svg class="r" style="left:1347px;top:659px;" width="8" height="9" viewBox="0 0 8 9"><path d="M1.5 1 L6 4.5 L1.5 8" stroke="#404040" stroke-width="1.8" fill="none"/></svg>
<div class="r" style="left:186px;top:208px;width:157px;height:26px;border:5px solid #ed1c24;"></div>
<div class="r" style="left:630px;top:286px;width:156px;height:88px;border:5px solid #ed1c24;"></div>
<div class="r" style="left:25px;top:680px;width:1340px;height:23px;background:#f0e68c;"></div>
<div class="r" style="left:23px;top:703px;width:1343px;height:1px;background:#a0a0a0;"></div>
<svg class="r" style="left:28px;top:683px;" width="17" height="17" viewBox="0 0 17 17"><defs><radialGradient id="okg" cx="0.4" cy="0.3" r="0.8"><stop offset="0" stop-color="#7fd67f"/><stop offset="1" stop-color="#1f8f2f"/></radialGradient></defs>
<circle cx="8.5" cy="8.5" r="8" fill="url(#okg)" stroke="#2a7a33" stroke-width="0.8"/><path d="M4.5 8.5 L7.5 11.5 L12.5 5.5" stroke="#fff" stroke-width="2" fill="none"/></svg>
<div class="t" style="left:48px;top:684px;font-size:12px;line-height:16px;color:#000;letter-spacing:-0.150px;">Query executed successfully.</div>
<div class="r" style="left:929px;top:682px;width:1px;height:19px;background:#8a8458;"></div>
<div class="r" style="left:1065px;top:682px;width:1px;height:19px;background:#8a8458;"></div>
<div class="r" style="left:1167px;top:682px;width:1px;height:19px;background:#8a8458;"></div>
<div class="r" style="left:1250px;top:682px;width:1px;height:19px;background:#8a8458;"></div>
<div class="r" style="left:1305px;top:682px;width:1px;height:19px;background:#8a8458;"></div>
<div class="t" style="left:936px;top:684px;font-size:12px;line-height:16px;color:#000;letter-spacing:-0.643px;">10.145.65.80 (10.50 SP2)</div>
<div class="t" style="left:1072px;top:684px;font-size:12px;line-height:16px;color:#000;letter-spacing:-0.149px;">wtdbreader (405)</div>
<div class="t" style="left:1174px;top:684px;font-size:11.5px;line-height:16px;color:#000;letter-spacing:-0.786px;">OPERS_12095</div>
<div class="t" style="left:1257px;top:684px;font-size:12px;line-height:16px;color:#000;letter-spacing:-0.590px;">00:00:00</div>
<div class="t" style="left:1312px;top:684px;font-size:12px;line-height:16px;color:#000;letter-spacing:-0.224px;">5 rows</div>
<div class="r" style="left:0px;top:705px;width:1366px;height:23px;background:#f0f0f0;"></div>
<div class="t" style="left:9px;top:710px;font-size:12px;line-height:16px;color:#000;letter-spacing:-0.338px;">Ready</div>
<div class="t" style="left:1031px;top:710px;font-size:12px;line-height:16px;color:#000;letter-spacing:-0.406px;">Ln 24</div>
<div class="t" style="left:1113px;top:710px;font-size:12px;line-height:16px;color:#000;letter-spacing:-0.212px;">Col 115</div>
<div class="t" style="left:1203px;top:710px;font-size:12px;line-height:16px;color:#000;letter-spacing:-0.302px;">Ch 115</div>
<div class="t" style="left:1334px;top:710px;font-size:12px;line-height:16px;color:#000;letter-spacing:-0.339px;">INS</div>
<div class="r" style="left:0px;top:728px;width:1366px;height:40px;background:linear-gradient(100deg,#030a1c 0%,#030a1c 60%,#0b1525 71%,#050d1f 80%,#030a1c 100%);"></div>
<div class="r" style="left:0px;top:768px;width:1366px;height:59px;background:#ffffff;"></div>
<div class="r" style="left:246px;top:728px;width:45px;height:40px;background:#333a4b;"></div>
<div class="r" style="left:291px;top:728px;width:3px;height:40px;background:#1f2636;"></div>
<div class="r" style="left:103px;top:766px;width:40px;height:2px;background:#76b9ed;"></div>
<div class="r" style="left:152px;top:766px;width:40px;height:2px;background:#76b9ed;"></div>
<div class="r" style="left:201px;top:766px;width:40px;height:2px;background:#76b9ed;"></div>
<div class="r" style="left:246px;top:766px;width:48px;height:2px;background:#76b9ed;"></div>
<div class="r" style="left:299px;top:766px;width:40px;height:2px;background:#76b9ed;"></div>
<div class="r" style="left:397px;top:766px;width:40px;height:2px;background:#76b9ed;"></div>
<div class="r" style="left:446px;top:766px;width:40px;height:2px;background:#76b9ed;"></div>
<div class="r" style="left:429px;top:766px;width:8px;height:2px;background:#5f8fb8;"></div>
<svg class="r" style="left:16px;top:740px;" width="16" height="16.5" viewBox="0 0 18 18"><path d="M0 2.6 L7.3 1.6 V8.5 H0z M8.3 1.45 L18 0 V8.5 H8.3z M0 9.5 H7.3 V16.4 L0 15.4z M8.3 9.5 H18 V18 L8.3 16.55z" fill="#ffffff"/></svg>
<svg class="r" style="left:62px;top:741px;" width="21" height="14" viewBox="0 0 21 14"><rect x="4.5" y="0.75" width="12" height="12.5" fill="none" stroke="#fff" stroke-width="1.5"/><path d="M2.5 2.5 H0.75 V11.5 H2.5 M18.5 2.5 H20.25 V11.5 H18.5" fill="none" stroke="#fff" stroke-width="1.2"/></svg>
<svg class="r" style="left:111px;top:737px;" width="24" height="22" viewBox="0 0 24 22"><path d="M1 2.5 h8 l2 2 h11 a1 1 0 0 1 1 1 v13 h-22z" fill="#f5c64d"/><path d="M1 7 h22 v12.5 a1 1 0 0 1 -1 1 h-20 a1 1 0 0 1 -1 -1z" fill="#fbdd80"/>
<path d="M6.5 14.5 h11 v6 h-2.6 v-3 h-5.8 v3 h-2.6z" fill="#38a5e8"/><path d="M6.5 13.5 h11 v1.4 h-11z" fill="#1b87d1"/></svg>
<svg class="r" style="left:160px;top:736px;" width="24" height="24" viewBox="0 0 24 24"><path d="M1.5 1.5 h14 l4 4 v17 h-18z" fill="#f4f4ea" stroke="#9a9a8a" stroke-width="0.8"/><path d="M3 1 v2 M5 1 v2 M7 1 v2 M9 1 v2 M11 1 v2 M13 1 v2" stroke="#777" stroke-width="0.7"/>
<rect x="2" y="12" width="17" height="10" fill="#86d23c"/><rect x="2" y="20" width="17" height="2" fill="#4fa018"/>
<path d="M5 8 v6 M4 14 h2 M7 10 h1 M9 10 h1 M11 10 h1" stroke="#333" stroke-width="1"/>
<path d="M21.5 1 L23.5 3 L12.5 16.5 L9.5 18 L10.5 14.5z" fill="#f0a030" stroke="#a05a10" stroke-width="0.6"/><path d="M21.5 1 L23.5 3 L22.3 4.4 L20.3 2.4z" fill="#e05050"/></svg>
<svg class="r" style="left:209px;top:736px;" width="24" height="24" viewBox="0 0 24 24"><rect x="0" y="0" width="24" height="24" fill="#68217a"/>
<path d="M17.5 3.5 L21 5 V19 L17.5 20.5 L8.5 13.8 L5 16.8 L3.2 16 V8 L5 7.2 L8.5 10.2z M17.2 8.3 L12 12 L17.2 15.7z M5 10 V14 L7 12z" fill="#ffffff" fill-rule="evenodd"/></svg>
<svg class="r" style="left:257px;top:735px;" width="27" height="27" viewBox="0 0 27 27">
<defs><linearGradient id="cy2" x1="0" y1="0" x2="1" y2="0"><stop offset="0" stop-color="#d9a21a"/><stop offset="0.35" stop-color="#fff0a8"/><stop offset="0.7" stop-color="#f0b81e"/><stop offset="1" stop-color="#c48a10"/></linearGradient></defs>
<path d="M12.5 2.6 h8 v8.4" fill="none" stroke="#5fc02a" stroke-width="1.3" stroke-dasharray="1.3 1.3"/><path d="M2.6 14.6 v4.8 h7" fill="none" stroke="#5fc02a" stroke-width="1.3" stroke-dasharray="1.3 1.3"/>
<rect x="1.8" y="1.6" width="7" height="9" rx="1" fill="url(#cy2)"/><ellipse cx="5.3" cy="1.9" rx="3.4" ry="1" fill="#f4dc8a"/>
<path d="M8 23.6 L14.6 16.8" stroke="#f0b428" stroke-width="2.2" stroke-linecap="round"/><path d="M10.4 13.4 L22.6 24.6" stroke="#c4ccd8" stroke-width="2.6" stroke-linecap="round"/><path d="M11 14 L22 24" stroke="#eef2f8" stroke-width="0.9"/>
<circle cx="9.6" cy="12.8" r="2.3" fill="none" stroke="#b4bcc8" stroke-width="1.7"/>
<path d="M14.6 11.6 h4.6 q3.6 0.8 4.4 5.2 l-1.6 1.4 q-1.2 -4.4 -4.4 -4.2 l-2 2.6" fill="#c8d0dc" stroke="#8a94a4" stroke-width="0.7"/>
</svg>
<svg class="r" style="left:307px;top:737px;" width="24" height="24" viewBox="0 0 24 24"><circle cx="11" cy="11" r="11" fill="#dd4b3e"/>
<path d="M11 11 L1.47 5.5 A11 11 0 0 0 11 22 L16 13.9z" fill="#1e9d58"/>
<path d="M11 11 L16 13.9 L11 22 A11 11 0 0 0 20.53 5.5 H11z" fill="#fcc934"/>
<path d="M1.47 5.5 A11 11 0 0 1 20.53 5.5 H11z" fill="#dd4b3e"/>
<circle cx="11" cy="11" r="5.2" fill="#f4f4f4"/><circle cx="11" cy="11" r="4" fill="#4587f4"/><circle cx="18" cy="16.5" r="3.4" fill="#c89058"/><rect x="14" y="19" width="8.5" height="5" rx="1.5" fill="#3b66c4"/><rect x="14.8" y="15" width="6.4" height="2" fill="#333"/><rect x="13.5" y="21.5" width="9.5" height="2.5" fill="#e6c23a"/></svg>
<svg class="r" style="left:356px;top:736px;" width="23" height="23" viewBox="0 0 23 23"><defs><radialGradient id="dsc" cx="0.45" cy="0.4" r="0.7"><stop offset="0" stop-color="#ffffff"/><stop offset="0.4" stop-color="#dcd8c8"/><stop offset="1" stop-color="#8a8678"/></radialGradient>
<linearGradient id="rg" x1="1" y1="0" x2="0" y2="1"><stop offset="0" stop-color="#7a0808"/><stop offset="0.6" stop-color="#e82020"/><stop offset="1" stop-color="#ff4040"/></linearGradient>
<linearGradient id="bg2" x1="0" y1="1" x2="1" y2="0"><stop offset="0" stop-color="#0a2a8a"/><stop offset="0.6" stop-color="#2a68e8"/><stop offset="1" stop-color="#5a9cff"/></linearGradient></defs>
<circle cx="11.5" cy="11.5" r="10.8" fill="#0a0a0c"/><circle cx="11.5" cy="11.5" r="10" fill="none" stroke="#3a3a3e" stroke-width="0.8"/>
<path d="M13.4 0.9 A10.8 10.8 0 0 0 2.2 6.1 L5.6 8.1 A6.8 6.8 0 0 1 12.7 4.8z" fill="url(#rg)"/><path d="M0 4.85 L7.8 9.35 L1.4 11.4z" fill="#f03434"/>
<g transform="rotate(180 11.5 11.5)"><path d="M13.4 0.9 A10.8 10.8 0 0 0 2.2 6.1 L5.6 8.1 A6.8 6.8 0 0 1 12.7 4.8z" fill="url(#bg2)"/><path d="M0 4.85 L7.8 9.35 L1.4 11.4z" fill="#3a7cf4"/></g>
<circle cx="11.5" cy="11.5" r="6.2" fill="url(#dsc)"/><circle cx="11.5" cy="11.5" r="1.5" fill="#f8f6ee" stroke="#9c988a" stroke-width="0.5"/></svg>
<svg class="r" style="left:405px;top:735px;" width="22" height="26" viewBox="0 0 22 26"><defs><linearGradient id="fl" x1="0" y1="0" x2="0.3" y2="1"><stop offset="0" stop-color="#f8a838"/><stop offset="0.45" stop-color="#fcc858"/><stop offset="1" stop-color="#ffe648"/></linearGradient>
<linearGradient id="fl2" x1="0" y1="0" x2="0" y2="1"><stop offset="0" stop-color="#e8640e"/><stop offset="1" stop-color="#f07c14"/></linearGradient></defs>
<path d="M17.5 1.1 C10 2.5 2.3 8 2.1 15.8 A9.5 9.5 0 1 0 13.1 6.5 C14 4.5 15.5 2.5 17.5 1.1z" fill="url(#fl)"/>
<path d="M12.5 11.3 C9 12 5.2 14 5.1 17.9 A4.9 4.9 0 1 0 11 13.1 C11.2 12.4 11.8 11.8 12.5 11.3z" fill="url(#fl2)"/></svg>
<svg class="r" style="left:454px;top:737px;" width="24" height="24" viewBox="0 0 24 24"><circle cx="11" cy="11" r="11" fill="#dd4b3e"/>
<path d="M11 11 L1.47 5.5 A11 11 0 0 0 11 22 L16 13.9z" fill="#1e9d58"/>
<path d="M11 11 L16 13.9 L11 22 A11 11 0 0 0 20.53 5.5 H11z" fill="#fcc934"/>
<path d="M1.47 5.5 A11 11 0 0 1 20.53 5.5 H11z" fill="#dd4b3e"/>
<circle cx="11" cy="11" r="5.2" fill="#f4f4f4"/><circle cx="11" cy="11" r="4" fill="#4587f4"/><rect x="11.5" y="13" width="9" height="6.5" rx="2" fill="#222"/><rect x="12.5" y="14.5" width="7" height="1.6" fill="#d8b090"/><path d="M15 19.5 L22 23.5 L19 23.5 L14 21z" fill="#222"/><path d="M20 19 l3.5 3" stroke="#222" stroke-width="1.4"/></svg>
<div class="r" style="left:1361px;top:728px;width:1px;height:40px;background:#3a4050;"></div>
<svg class="r" style="left:1146px;top:743px;" width="14" height="9" viewBox="0 0 14 9"><path d="M1 8 L7 2 L13 8" stroke="#fff" stroke-width="1.3" fill="none"/></svg>
<svg class="r" style="left:1169px;top:741px;" width="17" height="15" viewBox="0 0 17 15"><rect x="2.6" y="1.6" width="12.8" height="9" fill="none" stroke="#fff" stroke-width="1.2"/><rect x="0.6" y="1.6" width="4" height="5" fill="#050c1e" stroke="#fff" stroke-width="1.1"/><path d="M1.8 3.2 h1.8 l-0.9 1.2z" fill="#fff"/>
<path d="M2.6 6.6 V14.2 M8.6 10.6 V13.6 M4.8 13.8 H12" stroke="#fff" stroke-width="1.2" fill="none"/></svg>
<svg class="r" style="left:1193px;top:741px;" width="16" height="14" viewBox="0 0 16 14"><path d="M0.7 4.6 H2.6 L5.6 1.6 V12.4 L2.6 9.4 H0.7z" fill="none" stroke="#fff" stroke-width="1.1"/><path d="M9 4.6 L13.4 9.6 M13.4 4.6 L9 9.6" stroke="#fff" stroke-width="1.2"/></svg>
<div class="t" style="left:1219px;top:732px;font-size:12px;line-height:16px;color:#fff;letter-spacing:-1.339px;">ENG</div>
<div class="t" style="left:1224px;top:750px;font-size:12px;line-height:16px;color:#fff;letter-spacing:-1.336px;">US</div>
<div class="t" style="left:1261px;top:731px;font-size:12px;line-height:16px;color:#fff;letter-spacing:-0.529px;">5:58 PM</div>
<div class="t" style="left:1253px;top:749px;font-size:12px;line-height:16px;color:#fff;letter-spacing:-0.117px;">11/13/2017</div>
<svg class="r" style="left:1325px;top:741px;" width="24" height="22" viewBox="0 0 24 22"><path d="M0.5 0.5 H16.5 V12.5 H6 L3 15.5 V12.5 H0.5z" fill="#fff"/><path d="M3 3.5h11M3 6h11M3 8.5h8" stroke="#050b1d" stroke-width="1"/>
<circle cx="15.5" cy="14" r="7" fill="#3d3f4a" stroke="#8a8c96" stroke-width="1"/></svg>
<div class="t" style="left:1338px;top:748px;font-size:10px;line-height:14px;color:#fff;font-weight:bold;">1</div>
<svg class="r" style="left:13px;top:52px;" width="17" height="17" viewBox="0 0 17 17"><path d="M3.5 1.5 h6 l3 3 v9 h-9z" fill="#f4f7fd" stroke="#4a5f9c" stroke-width="1"/><path d="M9.5 1.5 v3 h3" fill="#cfd9f0" stroke="#4a5f9c" stroke-width="0.8"/>
<path d="M4 0.3 L4.8 2.6 L7.2 1.6 L6 3.8 L8 4.8 L5.8 5.4 L6.6 7.6 L4.4 6.4 L3.2 8.4 L2.8 6 L0.4 6.4 L2 4.6 L0 3.2 L2.4 2.8 L2 0.6 L3.6 2z" fill="#ffb400"/><circle cx="4" cy="4.2" r="1.6" fill="#ffe680"/>
<path d="M0 15.5 h16" stroke="#8a6a00" stroke-width="1" stroke-dasharray="5 1"/><path d="M8 12.5 v3" stroke="#4a5f9c" stroke-width="1"/><rect x="7" y="14.5" width="2.4" height="2" fill="#ffd24a" stroke="#8a6a00" stroke-width="0.5"/></svg>
<svg class="r" style="left:104px;top:53px;" width="16" height="16" viewBox="0 0 16 16"><path d="M0.5 1.5 h6 l3 3 v9 h-9z" fill="#f4f7fd" stroke="#4a5f9c" stroke-width="1"/><path d="M6.5 1.5 v3 h3" fill="#cfd9f0" stroke="#4a5f9c" stroke-width="0.8"/><rect x="8.5" y="7" width="6" height="8" fill="#e8b21e"/><ellipse cx="11.5" cy="7" rx="3" ry="1.4" fill="#fbe28a" stroke="#b88a10" stroke-width="0.5"/><ellipse cx="11.5" cy="15" rx="3" ry="1.2" fill="#c89612"/><path d="M8.5 7 v8 M14.5 7 v8" stroke="#b88a10" stroke-width="0.6"/></svg>
<svg class="r" style="left:133px;top:53px;" width="16" height="16" viewBox="0 0 16 16"><path d="M0.5 1.5 h6 l3 3 v9 h-9z" fill="#f4f7fd" stroke="#4a5f9c" stroke-width="1"/><path d="M6.5 1.5 v3 h3" fill="#cfd9f0" stroke="#4a5f9c" stroke-width="0.8"/><rect x="9" y="7.5" width="5" height="8" rx="0.8" fill="#dfe3ea" stroke="#7d8796" stroke-width="0.8"/><rect x="10" y="9" width="3" height="3" fill="#f0a020"/><rect x="10" y="13" width="3" height="1.4" fill="#fff"/></svg>
<svg class="r" style="left:162px;top:53px;" width="17" height="16" viewBox="0 0 17 16"><path d="M0.5 3.5 h5 l1.5 1.5 h6 v2" fill="#f3c64a" stroke="#b98a14" stroke-width="0.9"/><path d="M0.5 3.5 v10.5 h11.5 l4 -7 h-11.5 l-3.6 6.4" fill="#fbdc7a" stroke="#b98a14" stroke-width="0.9"/>
<path d="M9.5 3 q3 -3.4 6 0.4" fill="none" stroke="#5a78b8" stroke-width="1.1"/><path d="M16.3 1 v3.2 h-3.2z" fill="#5a78b8"/></svg>
<svg class="r" style="left:186px;top:53px;" width="15" height="15" viewBox="0 0 15 15"><path d="M0.5 0.5 h13 l1 1 v13 h-14z" fill="#5555c8" stroke="#2d2d8c" stroke-width="1"/><rect x="3" y="1" width="9" height="7" fill="#eef1fa"/><rect x="4" y="10" width="7" height="4.5" fill="#24242e"/><rect x="8.3" y="11" width="2" height="3" fill="#e6e6f2"/></svg>
<svg class="r" style="left:208px;top:53px;" width="16" height="16" viewBox="0 0 16 16"><path d="M4.5 1 h8 l-2 5.5 h-8z" fill="#ffffff" stroke="#6c7a90" stroke-width="0.9"/><path d="M5.5 3 h5 M4.8 4.8 h5" stroke="#9aa4b6" stroke-width="0.7"/>
<path d="M0.8 8 q0 -1.8 2 -1.8 h10 q2.4 0 2.4 2 v4.6 q0 1.6 -1.6 1.6 h-11 q-1.8 0 -1.8 -1.6z" fill="#b9c4d6" stroke="#5c6b86" stroke-width="0.9"/><path d="M1 10.5 h14" stroke="#8794ac" stroke-width="0.8"/><rect x="10.5" y="10.6" width="2.6" height="2.4" fill="#2fc42f"/></svg>
<svg class="r" style="left:237px;top:53px;" width="17" height="16" viewBox="0 0 17 16"><rect x="0.5" y="1.5" width="13" height="10" fill="#dfe8f7" stroke="#3a4f8c" stroke-width="1"/><path d="M0.5 5 h13 M0.5 8.5 h13 M4 1.5 v10 M7.5 1.5 v10 M11 1.5 v10" stroke="#fff" stroke-width="0.7"/>
<path d="M1 7 l3 -3 l2.5 2.5 l3.5 -4 l3 3" fill="none" stroke="#2f9e3a" stroke-width="1.3"/><path d="M1 3 l4 4 l3 1 l5 2" fill="none" stroke="#4a7ae0" stroke-width="1"/>
<path d="M0.5 12.5 h13" stroke="#1f2a4c" stroke-width="1.4"/><path d="M11.5 11 l1.8 2.8 l2.4 -5.6" fill="none" stroke="#2d8a2d" stroke-width="1.8"/></svg>
<svg class="r" style="left:13px;top:79px;" width="17" height="16" viewBox="0 0 17 16"><rect x="0.5" y="1.5" width="9" height="7.5" fill="#d4d4d4" stroke="#b4b4b4"/><rect x="2" y="3" width="6" height="4.5" fill="#c2c2c2"/><path d="M1 10.5 h8.5 v2 h-8.5z" fill="#d0d0d0" stroke="#b8b8b8" stroke-width="0.6"/>
<rect x="11.5" y="1" width="4" height="7.5" fill="#e2e2e2" stroke="#b8b8b8" stroke-width="0.8"/><path d="M4.5 12.5 v2.5 h9 v-5" fill="none" stroke="#b0b0b0" stroke-width="1"/><path d="M11.5 11 l2 -2.4 l2 2.4z" fill="#b0b0b0"/></svg>
<svg class="r" style="left:36px;top:78px;" width="17" height="17" viewBox="0 0 17 17"><rect x="0.5" y="1.5" width="3.6" height="6.5" fill="#dfe8f7" stroke="#44598f" stroke-width="0.9"/><rect x="6" y="5.5" width="3.6" height="6.5" fill="#dfe8f7" stroke="#44598f" stroke-width="0.9"/><rect x="11.8" y="0.5" width="3.6" height="6.5" fill="#dfe8f7" stroke="#44598f" stroke-width="0.9"/>
<path d="M2.3 8.5 v6.5 h6 v-2.6" fill="none" stroke="#1e9e1e" stroke-width="1.2"/><path d="M8.3 15 h3.6" stroke="#e02020" stroke-width="1.2"/><path d="M13.6 7.5 v4.5" stroke="#e02020" stroke-width="1.1"/>
<path d="M11 11.5 l5 5 M16 11.5 l-5 5 M13.5 11 v6" stroke="#e02020" stroke-width="1.1"/></svg>
<svg class="r" style="left:236px;top:80px;" width="6" height="13" viewBox="0 0 6 13"><path d="M1 1.2 q2 -1.8 4 0 l-1.2 7 h-1.6z" fill="#e8452a"/><path d="M1.6 1.4 q1 -0.8 1.6 0 l-0.4 5z" fill="#ff9a7a"/><circle cx="3" cy="11" r="1.5" fill="#d83a20"/></svg>
<svg class="r" style="left:302px;top:80px;" width="8" height="13" viewBox="0 0 8 13"><path d="M0.5 0.5 L7 6.2 L0.5 12z" fill="#2f9a2f" stroke="#1c6e1c" stroke-width="0.8"/></svg>
<div class="r" style="left:323px;top:82px;width:9px;height:8px;background:#bdbdbd;border-radius:1px;box-shadow:0 0 1px #d0d0d0;"></div>
<svg class="r" style="left:344px;top:81px;" width="14" height="12" viewBox="0 0 14 12"><path d="M1 6.5 L4.6 10.4 L13 1.2" fill="none" stroke="#2e55c8" stroke-width="2.2"/></svg>
<svg class="r" style="left:367px;top:79px;" width="16" height="17" viewBox="0 0 16 17"><rect x="0.5" y="1" width="4" height="4.5" fill="#3d7ee8" stroke="#2450a8" stroke-width="0.7"/><rect x="1.3" y="1.8" width="2.4" height="2.9" fill="#a8d0ff" opacity="0.75"/><rect x="10.5" y="1" width="4" height="4.5" fill="#3d7ee8" stroke="#2450a8" stroke-width="0.7"/><rect x="11.3" y="1.8" width="2.4" height="2.9" fill="#a8d0ff" opacity="0.75"/><rect x="0.5" y="11" width="4" height="4.5" fill="#2ec82e" stroke="#1c8a1c" stroke-width="0.7"/><path d="M9.6 3.2 h-3.6 M7.4 1.8 l-1.6 1.4 l1.6 1.4" fill="none" stroke="#222" stroke-width="0.9"/><path d="M2.5 10.4 v-3.2 M1.2 8.4 l1.3 -1.4 l1.3 1.4" fill="none" stroke="#222" stroke-width="0.9"/><path d="M8 8.5 q0 -1.5 1.6 -1.5 h3.4 q1.6 0 1.6 1.5 v2.6 q0 1.5 -1.6 1.5 h-1.2 l-2.4 2.4 v-2.4 q-1.4 0 -1.4 -1.5z" fill="#fff" stroke="#555e70" stroke-width="0.9"/></svg>
<svg class="r" style="left:390px;top:79px;" width="16" height="16" viewBox="0 0 16 16"><rect x="5.5" y="0.5" width="10" height="9" fill="#f2f5fb" stroke="#8aa0d0" stroke-width="0.9"/><path d="M7 3.5h7M7 5.5h7" stroke="#b5c2de" stroke-width="0.8"/>
<rect x="0.5" y="6.5" width="10" height="8.5" fill="#f2f5fb" stroke="#8aa0d0" stroke-width="0.9"/><path d="M2 12.5h7" stroke="#b5c2de" stroke-width="0.8"/>
<rect x="4.5" y="7.5" width="6.5" height="3.5" fill="#fff" stroke="#2a3c78" stroke-width="1.2"/></svg>
<div class="r" style="left:409px;top:76px;width:23px;height:22px;background:#dde9f8;border:1px solid #3399ff;box-shadow:inset 0 0 0 1px #8cc4ff;"></div>
<svg class="r" style="left:413px;top:79px;" width="16" height="16" viewBox="0 0 16 16"><rect x="1.5" y="0.5" width="11" height="14.5" fill="#fff" stroke="#3a4560" stroke-width="1"/><path d="M3.5 3.5h7M3.5 5.5h7M3.5 7.5h7" stroke="#9aa6c0" stroke-width="0.8"/>
<rect x="2" y="9" width="10" height="5.5" fill="#3f4a66"/><path d="M5 10.6h6M5 12.8h6" stroke="#fff" stroke-width="0.9"/><path d="M3 10.6h1M3 12.8h1" stroke="#fff" stroke-width="0.9"/></svg>
<svg class="r" style="left:442px;top:79px;" width="16" height="17" viewBox="0 0 16 17"><rect x="0.5" y="1" width="4" height="4.5" fill="#3d7ee8" stroke="#2450a8" stroke-width="0.7"/><rect x="1.3" y="1.8" width="2.4" height="2.9" fill="#a8d0ff" opacity="0.75"/><rect x="10.5" y="1" width="4" height="4.5" fill="#3d7ee8" stroke="#2450a8" stroke-width="0.7"/><rect x="11.3" y="1.8" width="2.4" height="2.9" fill="#a8d0ff" opacity="0.75"/><rect x="0.5" y="11" width="4" height="4.5" fill="#2ec82e" stroke="#1c8a1c" stroke-width="0.7"/><path d="M9.6 3.2 h-3.6 M7.4 1.8 l-1.6 1.4 l1.6 1.4" fill="none" stroke="#222" stroke-width="0.9"/><path d="M2.5 10.4 v-3.2 M1.2 8.4 l1.3 -1.4 l1.3 1.4" fill="none" stroke="#222" stroke-width="0.9"/></svg>
<svg class="r" style="left:464px;top:79px;" width="17" height="17" viewBox="0 0 17 17"><rect x="0.5" y="1.5" width="9" height="7.5" fill="#1d2a3a" stroke="#3a4a60" stroke-width="0.6"/><rect x="1.5" y="2.5" width="2" height="6" fill="#2fc42f"/><rect x="4" y="4" width="2" height="4.5" fill="#e6e6e6"/><rect x="6.5" y="3" width="2" height="5.5" fill="#58b8f0"/>
<rect x="6.5" y="6.5" width="9" height="7" fill="#dfe8f7" stroke="#5a6ea8" stroke-width="0.9"/><rect x="8" y="8" width="6" height="4" fill="#2f8ef0"/><path d="M7.5 15 h8 v1.4 h-8z" fill="#c8d2e6" stroke="#6c7a9a" stroke-width="0.5"/></svg>
<svg class="r" style="left:492px;top:78px;" width="17" height="17" viewBox="0 0 17 17"><path d="M7.5 5 h5.5 l3 3 v8.2 h-8.5z" fill="#ffffff" stroke="#26365a" stroke-width="0.9"/><path d="M16 8 v8.2 h-8" fill="none" stroke="#1c2a48" stroke-width="1.6"/><path d="M13 5 v3 h3z" fill="#3a4a70"/><path d="M9.5 8.5h3M9.5 10.5h4.5M9.5 12.5h4.5M9.5 14.3h4.5" stroke="#6c7ea8" stroke-width="0.8"/><rect x="1" y="1" width="12" height="6.5" fill="#cfe0f8"/>
<path d="M2.6 1.4v2.8M8.4 1.4v2.8M6.6 5.2v2" stroke="#111" stroke-width="0.9"/><circle cx="5.4" cy="2.8" r="1.1" fill="none" stroke="#111" stroke-width="0.8"/><circle cx="11" cy="2.8" r="1.1" fill="none" stroke="#111" stroke-width="0.8"/><circle cx="3.4" cy="6.2" r="1.1" fill="none" stroke="#111" stroke-width="0.8"/>
<path d="M2 8.4 q-0.6 4 2.8 4.6 l0 -1.6 l3.6 2.8 l-3.6 2.8 l0 -1.6 q-5.2 -0.4 -4 -7z" fill="#3a6fe0" stroke="#1c3f9a" stroke-width="0.6"/></svg>
<div class="r" style="left:513px;top:76px;width:23px;height:22px;background:#dde9f8;border:1px solid #3399ff;box-shadow:inset 0 0 0 1px #8cc4ff;"></div>
<svg class="r" style="left:516px;top:78px;" width="17" height="17" viewBox="0 0 17 17"><rect x="4.5" y="4.5" width="12" height="11.5" fill="#9aa6c4" stroke="#8a94b0" stroke-width="0.6"/><rect x="5.2" y="5.2" width="3" height="2" fill="#ffffff"/><rect x="9.0" y="5.2" width="3" height="2" fill="#ffffff"/><rect x="12.8" y="5.2" width="3" height="2" fill="#ffffff"/><rect x="5.2" y="8.0" width="3" height="2" fill="#ffffff"/><rect x="9.0" y="8.0" width="3" height="2" fill="#ffffff"/><rect x="12.8" y="8.0" width="3" height="2" fill="#ffffff"/><rect x="5.2" y="10.8" width="3" height="2" fill="#ffffff"/><rect x="9.0" y="10.8" width="3" height="2" fill="#ffffff"/><rect x="12.8" y="10.8" width="3" height="2" fill="#ffffff"/><rect x="5.2" y="13.599999999999998" width="3" height="2" fill="#cfe0ff"/><rect x="9.0" y="13.599999999999998" width="3" height="2" fill="#cfe0ff"/><rect x="12.8" y="13.599999999999998" width="3" height="2" fill="#cfe0ff"/><rect x="1" y="1" width="12" height="6.5" fill="#cfe0f8"/>
<path d="M2.6 1.4v2.8M8.4 1.4v2.8M6.6 5.2v2" stroke="#111" stroke-width="0.9"/><circle cx="5.4" cy="2.8" r="1.1" fill="none" stroke="#111" stroke-width="0.8"/><circle cx="11" cy="2.8" r="1.1" fill="none" stroke="#111" stroke-width="0.8"/><circle cx="3.4" cy="6.2" r="1.1" fill="none" stroke="#111" stroke-width="0.8"/>
<path d="M2 8.4 q-0.6 4 2.8 4.6 l0 -1.6 l3.6 2.8 l-3.6 2.8 l0 -1.6 q-5.2 -0.4 -4 -7z" fill="#3a6fe0" stroke="#1c3f9a" stroke-width="0.6"/></svg>
<svg class="r" style="left:538px;top:78px;" width="17" height="17" viewBox="0 0 17 17"><path d="M7.5 5 h5.5 l3 3 v8.2 h-8.5z" fill="#f4f6fc" stroke="#26365a" stroke-width="0.9"/><path d="M16 8 v8.2 h-8" fill="none" stroke="#1c2a48" stroke-width="1.6"/><path d="M13 5 v3 h3z" fill="#3a4a70"/><path d="M10 8.4h2.4" stroke="#b8c4e0" stroke-width="0.8"/><rect x="1" y="1" width="12" height="6.5" fill="#cfe0f8"/>
<path d="M2.6 1.4v2.8M8.4 1.4v2.8M6.6 5.2v2" stroke="#111" stroke-width="0.9"/><circle cx="5.4" cy="2.8" r="1.1" fill="none" stroke="#111" stroke-width="0.8"/><circle cx="11" cy="2.8" r="1.1" fill="none" stroke="#111" stroke-width="0.8"/><circle cx="3.4" cy="6.2" r="1.1" fill="none" stroke="#111" stroke-width="0.8"/>
<path d="M2 8.4 q-0.6 4 2.8 4.6 l0 -1.6 l3.6 2.8 l-3.6 2.8 l0 -1.6 q-5.2 -0.4 -4 -7z" fill="#3a6fe0" stroke="#1c3f9a" stroke-width="0.6"/></svg>
<svg class="r" style="left:568px;top:80px;" width="15" height="15" viewBox="0 0 15 15"><path d="M0.8 1.5h13.2M3 13.8h11" stroke="#000" stroke-width="1"/><path d="M4 4.7h10M4 7.7h10" stroke="#18e8f8" stroke-width="1.1"/><path d="M6.3 10.7h7.7" stroke="#000" stroke-width="1"/></svg>
<svg class="r" style="left:592px;top:78px;" width="15" height="17" viewBox="0 0 15 17"><path d="M3.6 4.6 q3.4 -5 7 -1.4 q1.4 2.2 -1.4 3.6" fill="none" stroke="#1e58d8" stroke-width="1.3"/><path d="M1 2.4 l0.6 4.2 l3.8 -1.8z" fill="#1e58d8"/><path d="M3 6.7h10M3 9.7h10" stroke="#18e8f8" stroke-width="1.1"/><path d="M4.8 12.7h8.2M2 15.8h11" stroke="#000" stroke-width="1"/></svg>
<svg class="r" style="left:620px;top:80px;" width="16" height="14" viewBox="0 0 16 14"><path d="M2 1.5h14M2 10.5h14" stroke="#000" stroke-width="1"/><path d="M8 4.2h8M7 7.4h6" stroke="#000" stroke-width="1.8"/><path d="M2 13h14" stroke="#000" stroke-width="1" stroke-dasharray="3 1"/><path d="M7.3 -1 v16" stroke="#000" stroke-width="0.9" stroke-dasharray="1 1"/><path d="M6 5.6 h-5 M3.4 3.2 l-2.6 2.4 l2.6 2.4" fill="none" stroke="#3a6ae0" stroke-width="1.4"/></svg>
<svg class="r" style="left:643px;top:80px;" width="16" height="14" viewBox="0 0 16 14"><path d="M2 1.5h14M2 10.5h14" stroke="#000" stroke-width="1"/><path d="M8 4.2h8M7 7.4h6" stroke="#000" stroke-width="1.8"/><path d="M2 13h14" stroke="#000" stroke-width="1" stroke-dasharray="3 1"/><path d="M7.3 -1 v16" stroke="#000" stroke-width="0.9" stroke-dasharray="1 1"/><path d="M0.4 5.6 h5 M3 3.2 l2.6 2.4 l-2.6 2.4" fill="none" stroke="#3a6ae0" stroke-width="1.4"/></svg>
<div class="t" style="left:672px;top:77px;font-size:10.5px;line-height:12px;color:#111;">A</div>
<div class="t" style="left:682px;top:85px;font-size:9.5px;line-height:12px;color:#7a8290">B</div>
<svg class="r" style="left:672px;top:78px;" width="16" height="17" viewBox="0 0 16 17"><path d="M9.6 5.4 q0.2 -3 3.4 -3.6" fill="none" stroke="#4a6fd0" stroke-width="0.9" stroke-dasharray="1 1"/><path d="M11.6 0.8 l2.4 0.2 l-0.6 2.2" fill="none" stroke="#4a6fd0" stroke-width="0.8"/><path d="M2.6 9.4 q0.6 4.6 5.4 4.8" fill="none" stroke="#4a6fd0" stroke-width="0.9" stroke-dasharray="1 1"/><path d="M7 12.8 l1.8 1.5 l-1.8 1.5" fill="none" stroke="#4a6fd0" stroke-width="0.8"/></svg>
</body></html>
